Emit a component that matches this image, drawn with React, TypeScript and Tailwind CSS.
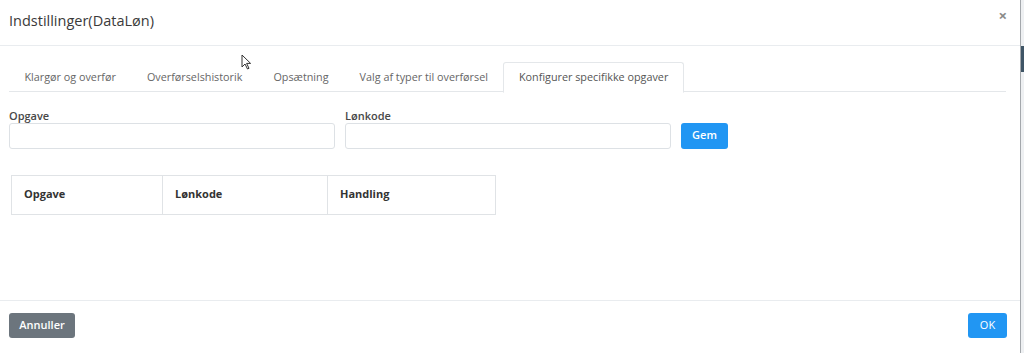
import { useState } from 'react';

const tabs = [
  'Klargør og overfør',
  'Overførselshistorik',
  'Opsætning',
  'Valg af typer til overførsel',
  'Konfigurer specifikke opgaver',
];

export default function App() {
  const [activeTab, setActiveTab] = useState(4);
  const [opgave, setOpgave] = useState('');
  const [lonkode, setLonkode] = useState('');

  return (
    <div className="relative w-[1024px] h-[353px] flex overflow-hidden bg-[#eef0f2] font-['Open_Sans',_'Liberation_Sans',_sans-serif] text-[#333]">
      <div className="w-[1021px] h-full bg-white border-r border-[#a4a8ac] flex flex-col">
        {/* Header */}
        <div className="h-[46px] shrink-0 border-b border-[#e9ecef] pl-[9px] pr-[13px] flex items-center justify-between pb-[4px]">
          <h4 className="text-[14.5px] text-[#3a3a3a]">Indstillinger(DataLøn)</h4>
          <button className="text-[#8a8a8a] text-[15px] font-bold leading-none mb-[10px]">×</button>
        </div>

        {/* Body */}
        <div className="flex-1 pl-[9px] pr-[14px] pt-[16px]">
          <div className="flex border-b border-[#e4e7ea] h-[30px]">
            {tabs.map((t, i) => (
              <button
                key={t}
                onClick={() => setActiveTab(i)}
                className={
                  i === activeTab
                    ? 'h-[31px] px-[14.5px] text-[10.8px] text-[#555] bg-white border border-[#e4e7ea] border-b-white rounded-t-[3px]'
                    : 'h-[30px] px-[14.5px] text-[10.8px] text-[#666] border border-transparent'
                }
              >
                {t}
              </button>
            ))}
          </div>

          <div className="flex items-end gap-[10px] mt-[14px]">
            <div className="w-[326px]">
              <label className="block text-[11px] font-semibold text-[#484848] leading-[15px] mb-[1px] -translate-y-[-2px]">Opgave</label>
              <input
                value={opgave}
                onChange={(e) => setOpgave(e.target.value)}
                className="w-full h-[26px] border border-[#dde1e5] rounded-[3px] px-2 text-[12px] outline-none"
              />
            </div>
            <div className="w-[326px]">
              <label className="block text-[11px] font-semibold text-[#484848] leading-[15px] mb-[1px] -translate-y-[-2px]">Lønkode</label>
              <input
                value={lonkode}
                onChange={(e) => setLonkode(e.target.value)}
                className="w-full h-[26px] border border-[#dde1e5] rounded-[3px] px-2 text-[12px] outline-none"
              />
            </div>
            <button className="w-[47px] h-[26px] bg-[#2196f3] text-white text-[11px] font-semibold rounded-[3px]">
              Gem
            </button>
          </div>

          <table className="ml-[2px] mt-[26px] w-[485px] border-collapse">
            <thead>
              <tr className="h-[39px]">
                <th className="w-[151px] border border-[#e0e3e6] text-left px-[12px] text-[11px] font-bold text-[#333]">Opgave</th>
                <th className="w-[165px] border border-[#e0e3e6] text-left px-[12px] text-[11px] font-bold text-[#333]">Lønkode</th>
                <th className="border border-[#e0e3e6] text-left px-[12px] text-[11px] font-bold text-[#333]">Handling</th>
              </tr>
            </thead>
          </table>
        </div>

        {/* Footer */}
        <div className="h-[53px] shrink-0 border-t border-[#e9ecef] pl-[9px] pr-[13px] flex items-center justify-between pb-[3px]">
          <button className="w-[66px] h-[25px] bg-[#6c757d] text-white text-[11px] font-semibold rounded-[3px]">
            Annuller
          </button>
          <button className="w-[39px] h-[25px] bg-[#2196f3] text-white text-[11px] rounded-[3px]">
            OK
          </button>
        </div>
      </div>

      {/* page behind modal */}
      <div className="flex-1 flex flex-col">
        <div className="h-[46px]" />
        <div className="h-[26px] bg-[#3f5566]" />
      </div>

      {/* mouse pointer */}
      <svg className="absolute left-[241px] top-[54px]" width="11" height="16" viewBox="0 0 11 16">
        <path d="M1 1 L1 13 L4 10 L6.5 15 L8 14.3 L5.6 9.4 L9.6 9.4 Z" fill="white" stroke="#333" strokeWidth="1" strokeLinejoin="round" />
      </svg>
    </div>
  );
}
